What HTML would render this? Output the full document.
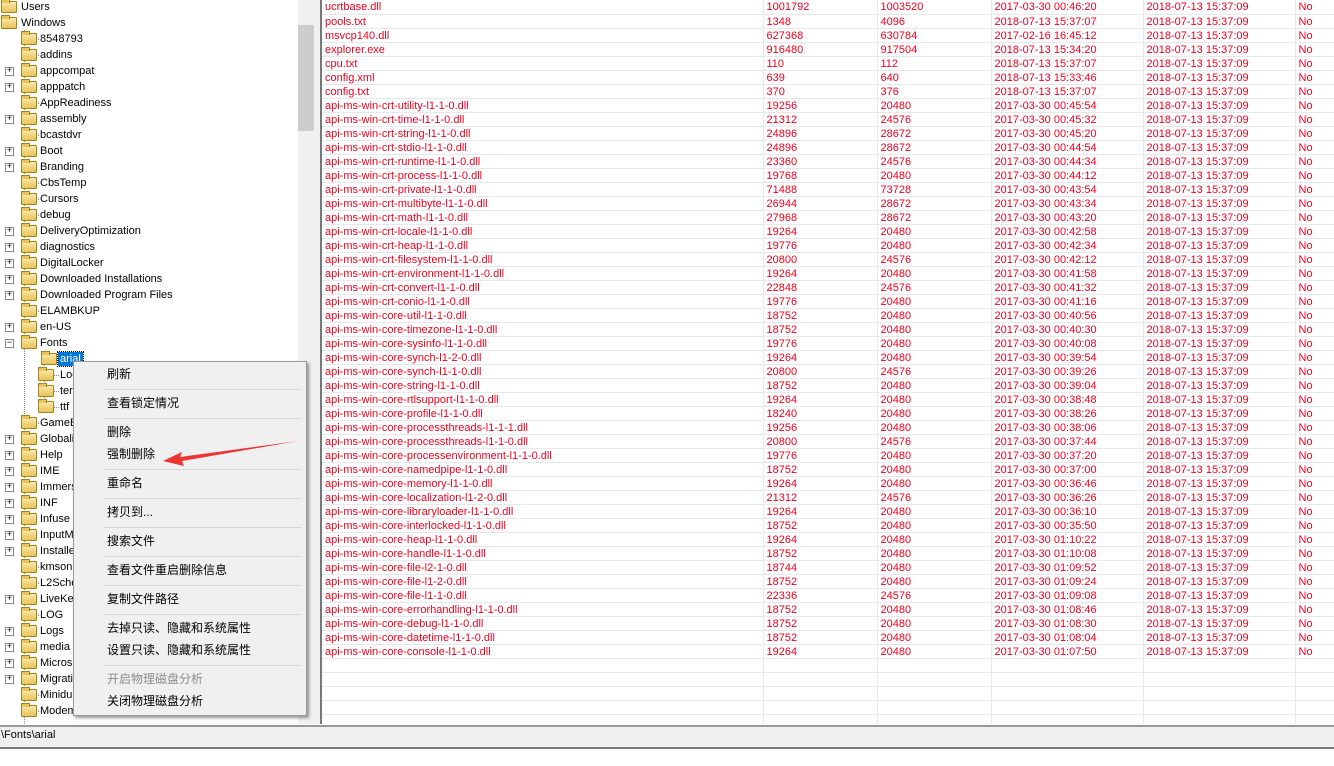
<!DOCTYPE html>
<html><head><meta charset="utf-8"><style>
*{margin:0;padding:0;box-sizing:border-box}
body{width:1334px;height:766px;background:#fff;position:relative;overflow:hidden;font-family:"Liberation Sans","Noto Sans CJK SC",sans-serif;font-size:11px;color:#000}
#tree{position:absolute;left:0;top:0;width:298px;height:724px;background:#fff;overflow:hidden}
.ti{position:absolute;height:16px;line-height:16px;white-space:nowrap}
.f{position:absolute;width:16px;height:12px;top:2px;background:linear-gradient(#fbe9a6,#e8c45a);border:1px solid #a88420;border-radius:1px}
.f:before{content:"";position:absolute;left:-1px;top:-3px;width:7px;height:3px;background:#e8c45a;border:1px solid #a88420;border-bottom:none}
.ex{position:absolute;width:9px;height:9px;top:4px;border:1px solid #888;background:#fff;font-size:9px;line-height:7px;text-align:center;font-family:"Liberation Mono",monospace;color:#000}
.dh{position:absolute;top:8px;border-top:1px dotted #888;height:0}
.dv{position:absolute;border-left:1px dotted #888;width:0}
.t{position:absolute;font-size:11px}
#sb{position:absolute;left:298px;top:0;width:16px;height:724px;background:#f0f0f0}
#th{position:absolute;left:298px;top:25px;width:16px;height:106px;background:#cdcdcd}
#split{position:absolute;left:314px;top:0;width:6px;height:724px;background:#f0f0f0}
#list{position:absolute;left:320px;top:0;width:1014px;height:724px;border-left:2px solid #777;background:#fff;overflow:hidden}
table{border-collapse:collapse;table-layout:fixed;position:absolute;left:0;top:0;width:1033px}
td{height:14px;border-bottom:1px solid #e8e8e8;border-right:1px solid #e8e8e8;color:#f0001e;font-size:11px;line-height:12px;padding-left:3px;padding-top:1px;white-space:nowrap;overflow:hidden}
#stat{position:absolute;left:0;top:725px;width:1334px;height:24px;background:#f0f0f0;border-top:2px solid #999;border-bottom:2px solid #777}
#stat span{position:absolute;left:1px;top:2px;font-size:11px}
#menu{position:absolute;left:73px;top:361px;width:234px;height:355px;background:#f0f0f0;border:1px solid #999;box-shadow:2px 2px 3px rgba(0,0,0,.4)}
.mi{position:absolute;left:33px;font-size:12px;line-height:16px}
.sep{position:absolute;left:30px;right:4px;height:1px;background:#d7d7d7}
</style></head><body>
<div id="tree">
<div class="dv" style="left:24px;top:30px;height:700px"></div>
<div class="dv" style="left:44px;top:354px;height:56px"></div>
<div class="ti" style="top:-1px;left:0"><div class="f" style="left:1px"></div><span class="t" style="left:21px">Users</span></div>
<div class="ti" style="top:15px;left:0"><div class="f" style="left:1px"></div><span class="t" style="left:21px">Windows</span></div>
<div class="ti" style="top:31px;left:0;width:300px"><div class="dh" style="left:25px;width:14px"></div><div class="f" style="left:21px"></div><span class="t" style="left:40px">8548793</span></div>
<div class="ti" style="top:47px;left:0;width:300px"><div class="dh" style="left:25px;width:14px"></div><div class="f" style="left:21px"></div><span class="t" style="left:40px">addins</span></div>
<div class="ti" style="top:63px;left:0;width:300px"><div class="ex" style="left:5px">+</div><div class="f" style="left:21px"></div><span class="t" style="left:40px">appcompat</span></div>
<div class="ti" style="top:79px;left:0;width:300px"><div class="ex" style="left:5px">+</div><div class="f" style="left:21px"></div><span class="t" style="left:40px">apppatch</span></div>
<div class="ti" style="top:95px;left:0;width:300px"><div class="dh" style="left:25px;width:14px"></div><div class="f" style="left:21px"></div><span class="t" style="left:40px">AppReadiness</span></div>
<div class="ti" style="top:111px;left:0;width:300px"><div class="ex" style="left:5px">+</div><div class="f" style="left:21px"></div><span class="t" style="left:40px">assembly</span></div>
<div class="ti" style="top:127px;left:0;width:300px"><div class="dh" style="left:25px;width:14px"></div><div class="f" style="left:21px"></div><span class="t" style="left:40px">bcastdvr</span></div>
<div class="ti" style="top:143px;left:0;width:300px"><div class="ex" style="left:5px">+</div><div class="f" style="left:21px"></div><span class="t" style="left:40px">Boot</span></div>
<div class="ti" style="top:159px;left:0;width:300px"><div class="ex" style="left:5px">+</div><div class="f" style="left:21px"></div><span class="t" style="left:40px">Branding</span></div>
<div class="ti" style="top:175px;left:0;width:300px"><div class="dh" style="left:25px;width:14px"></div><div class="f" style="left:21px"></div><span class="t" style="left:40px">CbsTemp</span></div>
<div class="ti" style="top:191px;left:0;width:300px"><div class="dh" style="left:25px;width:14px"></div><div class="f" style="left:21px"></div><span class="t" style="left:40px">Cursors</span></div>
<div class="ti" style="top:207px;left:0;width:300px"><div class="dh" style="left:25px;width:14px"></div><div class="f" style="left:21px"></div><span class="t" style="left:40px">debug</span></div>
<div class="ti" style="top:223px;left:0;width:300px"><div class="ex" style="left:5px">+</div><div class="f" style="left:21px"></div><span class="t" style="left:40px">DeliveryOptimization</span></div>
<div class="ti" style="top:239px;left:0;width:300px"><div class="ex" style="left:5px">+</div><div class="f" style="left:21px"></div><span class="t" style="left:40px">diagnostics</span></div>
<div class="ti" style="top:255px;left:0;width:300px"><div class="ex" style="left:5px">+</div><div class="f" style="left:21px"></div><span class="t" style="left:40px">DigitalLocker</span></div>
<div class="ti" style="top:271px;left:0;width:300px"><div class="ex" style="left:5px">+</div><div class="f" style="left:21px"></div><span class="t" style="left:40px">Downloaded Installations</span></div>
<div class="ti" style="top:287px;left:0;width:300px"><div class="ex" style="left:5px">+</div><div class="f" style="left:21px"></div><span class="t" style="left:40px">Downloaded Program Files</span></div>
<div class="ti" style="top:303px;left:0;width:300px"><div class="dh" style="left:25px;width:14px"></div><div class="f" style="left:21px"></div><span class="t" style="left:40px">ELAMBKUP</span></div>
<div class="ti" style="top:319px;left:0;width:300px"><div class="ex" style="left:5px">+</div><div class="f" style="left:21px"></div><span class="t" style="left:40px">en-US</span></div>
<div class="ti" style="top:335px;left:0;width:300px"><div class="ex" style="left:5px">−</div><div class="f" style="left:21px"></div><span class="t" style="left:40px">Fonts</span></div>
<div class="ti" style="top:351px;left:0;width:300px"><div class="dh" style="left:45px;width:14px"></div><div class="f" style="left:41px"></div><span class="t" style="left:58px;background:#0078d7;color:#fff;padding:0 2px;outline:1px dotted #000;line-height:14px;top:1px">arial</span></div>
<div class="ti" style="top:367px;left:0;width:300px"><div class="dh" style="left:45px;width:14px"></div><div class="f" style="left:38px"></div><span class="t" style="left:60px">Log</span></div>
<div class="ti" style="top:383px;left:0;width:300px"><div class="dh" style="left:45px;width:14px"></div><div class="f" style="left:38px"></div><span class="t" style="left:60px">ter</span></div>
<div class="ti" style="top:399px;left:0;width:300px"><div class="dh" style="left:45px;width:14px"></div><div class="f" style="left:38px"></div><span class="t" style="left:60px">ttf</span></div>
<div class="ti" style="top:415px;left:0;width:300px"><div class="dh" style="left:25px;width:14px"></div><div class="f" style="left:21px"></div><span class="t" style="left:40px">GameB</span></div>
<div class="ti" style="top:431px;left:0;width:300px"><div class="ex" style="left:5px">+</div><div class="f" style="left:21px"></div><span class="t" style="left:40px">Globali</span></div>
<div class="ti" style="top:447px;left:0;width:300px"><div class="ex" style="left:5px">+</div><div class="f" style="left:21px"></div><span class="t" style="left:40px">Help</span></div>
<div class="ti" style="top:463px;left:0;width:300px"><div class="ex" style="left:5px">+</div><div class="f" style="left:21px"></div><span class="t" style="left:40px">IME</span></div>
<div class="ti" style="top:479px;left:0;width:300px"><div class="ex" style="left:5px">+</div><div class="f" style="left:21px"></div><span class="t" style="left:40px">Immers</span></div>
<div class="ti" style="top:495px;left:0;width:300px"><div class="ex" style="left:5px">+</div><div class="f" style="left:21px"></div><span class="t" style="left:40px">INF</span></div>
<div class="ti" style="top:511px;left:0;width:300px"><div class="ex" style="left:5px">+</div><div class="f" style="left:21px"></div><span class="t" style="left:40px">Infuse</span></div>
<div class="ti" style="top:527px;left:0;width:300px"><div class="ex" style="left:5px">+</div><div class="f" style="left:21px"></div><span class="t" style="left:40px">InputM</span></div>
<div class="ti" style="top:543px;left:0;width:300px"><div class="ex" style="left:5px">+</div><div class="f" style="left:21px"></div><span class="t" style="left:40px">Installe</span></div>
<div class="ti" style="top:559px;left:0;width:300px"><div class="dh" style="left:25px;width:14px"></div><div class="f" style="left:21px"></div><span class="t" style="left:40px">kmson</span></div>
<div class="ti" style="top:575px;left:0;width:300px"><div class="dh" style="left:25px;width:14px"></div><div class="f" style="left:21px"></div><span class="t" style="left:40px">L2Sche</span></div>
<div class="ti" style="top:591px;left:0;width:300px"><div class="ex" style="left:5px">+</div><div class="f" style="left:21px"></div><span class="t" style="left:40px">LiveKe</span></div>
<div class="ti" style="top:607px;left:0;width:300px"><div class="dh" style="left:25px;width:14px"></div><div class="f" style="left:21px"></div><span class="t" style="left:40px">LOG</span></div>
<div class="ti" style="top:623px;left:0;width:300px"><div class="ex" style="left:5px">+</div><div class="f" style="left:21px"></div><span class="t" style="left:40px">Logs</span></div>
<div class="ti" style="top:639px;left:0;width:300px"><div class="ex" style="left:5px">+</div><div class="f" style="left:21px"></div><span class="t" style="left:40px">media</span></div>
<div class="ti" style="top:655px;left:0;width:300px"><div class="ex" style="left:5px">+</div><div class="f" style="left:21px"></div><span class="t" style="left:40px">Micros</span></div>
<div class="ti" style="top:671px;left:0;width:300px"><div class="ex" style="left:5px">+</div><div class="f" style="left:21px"></div><span class="t" style="left:40px">Migrati</span></div>
<div class="ti" style="top:687px;left:0;width:300px"><div class="dh" style="left:25px;width:14px"></div><div class="f" style="left:21px"></div><span class="t" style="left:40px">Minidu</span></div>
<div class="ti" style="top:703px;left:0;width:300px"><div class="dh" style="left:25px;width:14px"></div><div class="f" style="left:21px"></div><span class="t" style="left:40px">Modem</span></div>
</div>
<div id="sb"></div><div id="th"></div><div id="split"></div>
<div id="list"><table>
<colgroup><col style="width:441px"><col style="width:114px"><col style="width:114px"><col style="width:152px"><col style="width:152px"><col style="width:60px"></colgroup>
<tr><td>ucrtbase.dll</td><td>1001792</td><td>1003520</td><td>2017-03-30 00:46:20</td><td>2018-07-13 15:37:09</td><td>No</td></tr>
<tr><td>pools.txt</td><td>1348</td><td>4096</td><td>2018-07-13 15:37:07</td><td>2018-07-13 15:37:09</td><td>No</td></tr>
<tr><td>msvcp140.dll</td><td>627368</td><td>630784</td><td>2017-02-16 16:45:12</td><td>2018-07-13 15:37:09</td><td>No</td></tr>
<tr><td>explorer.exe</td><td>916480</td><td>917504</td><td>2018-07-13 15:34:20</td><td>2018-07-13 15:37:09</td><td>No</td></tr>
<tr><td>cpu.txt</td><td>110</td><td>112</td><td>2018-07-13 15:37:07</td><td>2018-07-13 15:37:09</td><td>No</td></tr>
<tr><td>config.xml</td><td>639</td><td>640</td><td>2018-07-13 15:33:46</td><td>2018-07-13 15:37:09</td><td>No</td></tr>
<tr><td>config.txt</td><td>370</td><td>376</td><td>2018-07-13 15:37:07</td><td>2018-07-13 15:37:09</td><td>No</td></tr>
<tr><td>api-ms-win-crt-utility-l1-1-0.dll</td><td>19256</td><td>20480</td><td>2017-03-30 00:45:54</td><td>2018-07-13 15:37:09</td><td>No</td></tr>
<tr><td>api-ms-win-crt-time-l1-1-0.dll</td><td>21312</td><td>24576</td><td>2017-03-30 00:45:32</td><td>2018-07-13 15:37:09</td><td>No</td></tr>
<tr><td>api-ms-win-crt-string-l1-1-0.dll</td><td>24896</td><td>28672</td><td>2017-03-30 00:45:20</td><td>2018-07-13 15:37:09</td><td>No</td></tr>
<tr><td>api-ms-win-crt-stdio-l1-1-0.dll</td><td>24896</td><td>28672</td><td>2017-03-30 00:44:54</td><td>2018-07-13 15:37:09</td><td>No</td></tr>
<tr><td>api-ms-win-crt-runtime-l1-1-0.dll</td><td>23360</td><td>24576</td><td>2017-03-30 00:44:34</td><td>2018-07-13 15:37:09</td><td>No</td></tr>
<tr><td>api-ms-win-crt-process-l1-1-0.dll</td><td>19768</td><td>20480</td><td>2017-03-30 00:44:12</td><td>2018-07-13 15:37:09</td><td>No</td></tr>
<tr><td>api-ms-win-crt-private-l1-1-0.dll</td><td>71488</td><td>73728</td><td>2017-03-30 00:43:54</td><td>2018-07-13 15:37:09</td><td>No</td></tr>
<tr><td>api-ms-win-crt-multibyte-l1-1-0.dll</td><td>26944</td><td>28672</td><td>2017-03-30 00:43:34</td><td>2018-07-13 15:37:09</td><td>No</td></tr>
<tr><td>api-ms-win-crt-math-l1-1-0.dll</td><td>27968</td><td>28672</td><td>2017-03-30 00:43:20</td><td>2018-07-13 15:37:09</td><td>No</td></tr>
<tr><td>api-ms-win-crt-locale-l1-1-0.dll</td><td>19264</td><td>20480</td><td>2017-03-30 00:42:58</td><td>2018-07-13 15:37:09</td><td>No</td></tr>
<tr><td>api-ms-win-crt-heap-l1-1-0.dll</td><td>19776</td><td>20480</td><td>2017-03-30 00:42:34</td><td>2018-07-13 15:37:09</td><td>No</td></tr>
<tr><td>api-ms-win-crt-filesystem-l1-1-0.dll</td><td>20800</td><td>24576</td><td>2017-03-30 00:42:12</td><td>2018-07-13 15:37:09</td><td>No</td></tr>
<tr><td>api-ms-win-crt-environment-l1-1-0.dll</td><td>19264</td><td>20480</td><td>2017-03-30 00:41:58</td><td>2018-07-13 15:37:09</td><td>No</td></tr>
<tr><td>api-ms-win-crt-convert-l1-1-0.dll</td><td>22848</td><td>24576</td><td>2017-03-30 00:41:32</td><td>2018-07-13 15:37:09</td><td>No</td></tr>
<tr><td>api-ms-win-crt-conio-l1-1-0.dll</td><td>19776</td><td>20480</td><td>2017-03-30 00:41:16</td><td>2018-07-13 15:37:09</td><td>No</td></tr>
<tr><td>api-ms-win-core-util-l1-1-0.dll</td><td>18752</td><td>20480</td><td>2017-03-30 00:40:56</td><td>2018-07-13 15:37:09</td><td>No</td></tr>
<tr><td>api-ms-win-core-timezone-l1-1-0.dll</td><td>18752</td><td>20480</td><td>2017-03-30 00:40:30</td><td>2018-07-13 15:37:09</td><td>No</td></tr>
<tr><td>api-ms-win-core-sysinfo-l1-1-0.dll</td><td>19776</td><td>20480</td><td>2017-03-30 00:40:08</td><td>2018-07-13 15:37:09</td><td>No</td></tr>
<tr><td>api-ms-win-core-synch-l1-2-0.dll</td><td>19264</td><td>20480</td><td>2017-03-30 00:39:54</td><td>2018-07-13 15:37:09</td><td>No</td></tr>
<tr><td>api-ms-win-core-synch-l1-1-0.dll</td><td>20800</td><td>24576</td><td>2017-03-30 00:39:26</td><td>2018-07-13 15:37:09</td><td>No</td></tr>
<tr><td>api-ms-win-core-string-l1-1-0.dll</td><td>18752</td><td>20480</td><td>2017-03-30 00:39:04</td><td>2018-07-13 15:37:09</td><td>No</td></tr>
<tr><td>api-ms-win-core-rtlsupport-l1-1-0.dll</td><td>19264</td><td>20480</td><td>2017-03-30 00:38:48</td><td>2018-07-13 15:37:09</td><td>No</td></tr>
<tr><td>api-ms-win-core-profile-l1-1-0.dll</td><td>18240</td><td>20480</td><td>2017-03-30 00:38:26</td><td>2018-07-13 15:37:09</td><td>No</td></tr>
<tr><td>api-ms-win-core-processthreads-l1-1-1.dll</td><td>19256</td><td>20480</td><td>2017-03-30 00:38:06</td><td>2018-07-13 15:37:09</td><td>No</td></tr>
<tr><td>api-ms-win-core-processthreads-l1-1-0.dll</td><td>20800</td><td>24576</td><td>2017-03-30 00:37:44</td><td>2018-07-13 15:37:09</td><td>No</td></tr>
<tr><td>api-ms-win-core-processenvironment-l1-1-0.dll</td><td>19776</td><td>20480</td><td>2017-03-30 00:37:20</td><td>2018-07-13 15:37:09</td><td>No</td></tr>
<tr><td>api-ms-win-core-namedpipe-l1-1-0.dll</td><td>18752</td><td>20480</td><td>2017-03-30 00:37:00</td><td>2018-07-13 15:37:09</td><td>No</td></tr>
<tr><td>api-ms-win-core-memory-l1-1-0.dll</td><td>19264</td><td>20480</td><td>2017-03-30 00:36:46</td><td>2018-07-13 15:37:09</td><td>No</td></tr>
<tr><td>api-ms-win-core-localization-l1-2-0.dll</td><td>21312</td><td>24576</td><td>2017-03-30 00:36:26</td><td>2018-07-13 15:37:09</td><td>No</td></tr>
<tr><td>api-ms-win-core-libraryloader-l1-1-0.dll</td><td>19264</td><td>20480</td><td>2017-03-30 00:36:10</td><td>2018-07-13 15:37:09</td><td>No</td></tr>
<tr><td>api-ms-win-core-interlocked-l1-1-0.dll</td><td>18752</td><td>20480</td><td>2017-03-30 00:35:50</td><td>2018-07-13 15:37:09</td><td>No</td></tr>
<tr><td>api-ms-win-core-heap-l1-1-0.dll</td><td>19264</td><td>20480</td><td>2017-03-30 01:10:22</td><td>2018-07-13 15:37:09</td><td>No</td></tr>
<tr><td>api-ms-win-core-handle-l1-1-0.dll</td><td>18752</td><td>20480</td><td>2017-03-30 01:10:08</td><td>2018-07-13 15:37:09</td><td>No</td></tr>
<tr><td>api-ms-win-core-file-l2-1-0.dll</td><td>18744</td><td>20480</td><td>2017-03-30 01:09:52</td><td>2018-07-13 15:37:09</td><td>No</td></tr>
<tr><td>api-ms-win-core-file-l1-2-0.dll</td><td>18752</td><td>20480</td><td>2017-03-30 01:09:24</td><td>2018-07-13 15:37:09</td><td>No</td></tr>
<tr><td>api-ms-win-core-file-l1-1-0.dll</td><td>22336</td><td>24576</td><td>2017-03-30 01:09:08</td><td>2018-07-13 15:37:09</td><td>No</td></tr>
<tr><td>api-ms-win-core-errorhandling-l1-1-0.dll</td><td>18752</td><td>20480</td><td>2017-03-30 01:08:46</td><td>2018-07-13 15:37:09</td><td>No</td></tr>
<tr><td>api-ms-win-core-debug-l1-1-0.dll</td><td>18752</td><td>20480</td><td>2017-03-30 01:08:30</td><td>2018-07-13 15:37:09</td><td>No</td></tr>
<tr><td>api-ms-win-core-datetime-l1-1-0.dll</td><td>18752</td><td>20480</td><td>2017-03-30 01:08:04</td><td>2018-07-13 15:37:09</td><td>No</td></tr>
<tr><td>api-ms-win-core-console-l1-1-0.dll</td><td>19264</td><td>20480</td><td>2017-03-30 01:07:50</td><td>2018-07-13 15:37:09</td><td>No</td></tr>
<tr><td></td><td></td><td></td><td></td><td></td><td></td></tr>
<tr><td></td><td></td><td></td><td></td><td></td><td></td></tr>
<tr><td></td><td></td><td></td><td></td><td></td><td></td></tr>
<tr><td></td><td></td><td></td><td></td><td></td><td></td></tr>
<tr><td></td><td></td><td></td><td></td><td></td><td></td></tr>
</table></div>
<div id="stat"><span>\Fonts\arial</span></div>
<div id="menu">
<div class="mi" style="top:4px">刷新</div>
<div class="sep" style="top:27px"></div>
<div class="mi" style="top:33px">查看锁定情况</div>
<div class="sep" style="top:56px"></div>
<div class="mi" style="top:62px">删除</div>
<div class="mi" style="top:84px">强制删除</div>
<div class="sep" style="top:107px"></div>
<div class="mi" style="top:113px">重命名</div>
<div class="sep" style="top:136px"></div>
<div class="mi" style="top:142px">拷贝到...</div>
<div class="sep" style="top:165px"></div>
<div class="mi" style="top:171px">搜索文件</div>
<div class="sep" style="top:194px"></div>
<div class="mi" style="top:200px">查看文件重启删除信息</div>
<div class="sep" style="top:223px"></div>
<div class="mi" style="top:229px">复制文件路径</div>
<div class="sep" style="top:252px"></div>
<div class="mi" style="top:258px">去掉只读、隐藏和系统属性</div>
<div class="mi" style="top:280px">设置只读、隐藏和系统属性</div>
<div class="sep" style="top:303px"></div>
<div class="mi" style="top:309px;color:#8c8c8c">开启物理磁盘分析</div>
<div class="mi" style="top:331px">关闭物理磁盘分析</div>
</div>
<svg style="position:absolute;left:0;top:0" width="1334" height="766"><path d="M298,441 L180,457 L182,452 L163,461 L184,466 L182,461 Z" fill="#ee3333"/></svg>
</body></html>
